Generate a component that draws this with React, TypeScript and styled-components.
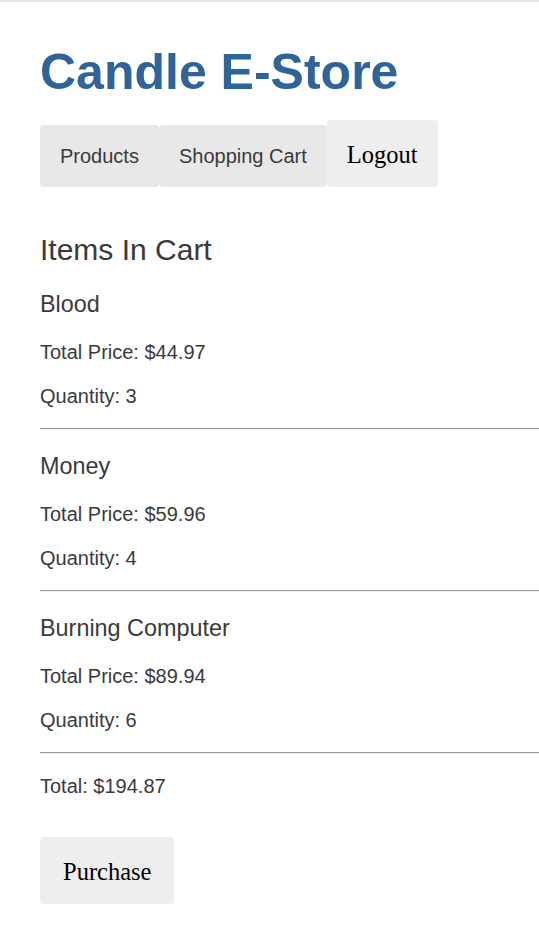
import React from "react";
import styled, { createGlobalStyle } from "styled-components";

const GlobalStyle = createGlobalStyle`
  html, body {
    margin: 0;
    padding: 0;
    background: #ffffff;
  }
  body {
    font-family: "Liberation Sans", Arial, sans-serif;
    color: #3a3a3a;
  }
`;

const TopBar = styled.div`
  height: 2px;
  background: #e5e5e5;
`;

const Page = styled.main`
  display: flex;
  flex-direction: column;
  align-items: stretch;
  padding: 0 0 32px 40px;
`;

const Title = styled.h1`
  margin: 41px 0 0;
  font-size: 50px;
  line-height: 58px;
  font-weight: 700;
  color: #2e6499;
`;

const Nav = styled.nav`
  display: flex;
  align-items: baseline;
  gap: 0;
  margin-top: 19px;
`;

const NavLink = styled.a`
  display: block;
  padding: 20px;
  font-size: 20px;
  line-height: 22px;
  color: #3a3a3a;
  background: #e8e8e8;
  border-radius: 4px;
  text-decoration: none;
  cursor: pointer;
`;

const Button = styled.button<{ $padX?: number }>`
  display: block;
  border: none;
  padding: 21px ${(p) => p.$padX ?? 20}px 19px;
  font-family: "Liberation Serif", "Times New Roman", serif;
  font-size: 24.5px;
  line-height: 27px;
  color: #000;
  background: #eeeeee;
  border-radius: 4px;
  cursor: pointer;
`;

const SectionTitle = styled.h2`
  margin: 45px 0 0;
  font-size: 30px;
  line-height: 35px;
  font-weight: 400;
`;

const Item = styled.section`
  display: flex;
  flex-direction: column;

  &:first-of-type {
    margin-top: 1px;
  }
`;

const ItemName = styled.h3`
  margin: 23px 0 0;
  font-size: 23.4px;
  line-height: 27px;
  font-weight: 400;
`;

const Line = styled.p<{ $gap: number }>`
  margin: ${(p) => p.$gap}px 0 0;
  font-size: 20px;
  line-height: 23px;
`;

const Divider = styled.hr`
  margin: 20.5px 0 0;
  height: 0;
  border: none;
  border-top: 1px solid #999999;
  border-bottom: 1px solid #eeeeee;
`;

const PurchaseRow = styled.div`
  display: flex;
  margin-top: 39px;
`;

const items = [
  { name: "Blood", price: "$44.97", qty: 3 },
  { name: "Money", price: "$59.96", qty: 4 },
  { name: "Burning Computer", price: "$89.94", qty: 6 },
];

export default function App() {
  return (
    <>
      <GlobalStyle />
      <TopBar />
      <Page>
        <Title>Candle E-Store</Title>
        <Nav>
          <NavLink>Products</NavLink>
          <NavLink>Shopping Cart</NavLink>
          <Button>Logout</Button>
        </Nav>
        <SectionTitle>Items In Cart</SectionTitle>
        {items.map((it) => (
          <Item key={it.name}>
            <ItemName>{it.name}</ItemName>
            <Line $gap={23}>Total Price: {it.price}</Line>
            <Line $gap={20.5}>Quantity: {it.qty}</Line>
            <Divider />
          </Item>
        ))}
        <Line $gap={21.3}>Total: $194.87</Line>
        <PurchaseRow>
          <Button $padX={23}>Purchase</Button>
        </PurchaseRow>
      </Page>
    </>
  );
}
